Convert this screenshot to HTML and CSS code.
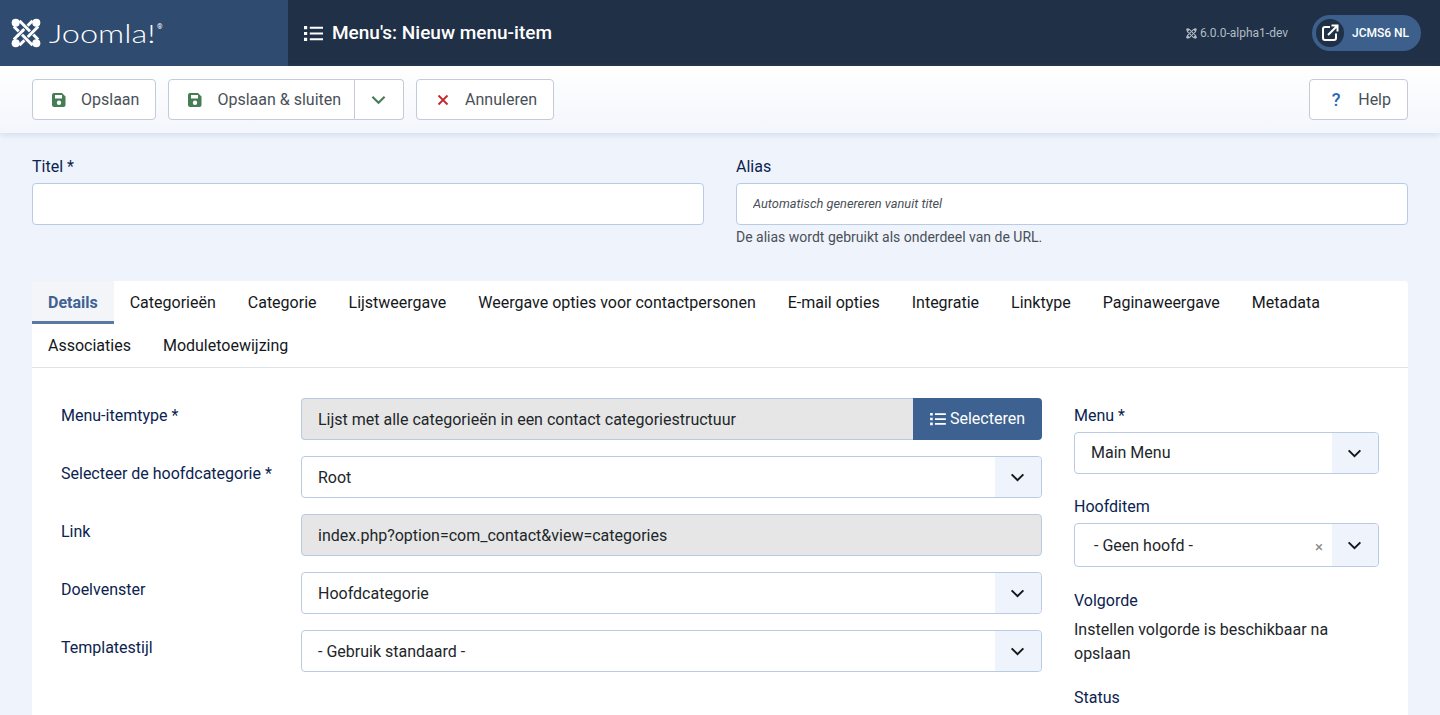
FILE: index.html
```html
<!DOCTYPE html>
<html lang="nl">
<head>
  <meta charset="UTF-8" />
  <meta name="viewport" content="width=device-width, initial-scale=1.0" />
  <title>Menu's: Nieuw menu-item</title>
  <link rel="stylesheet" href="styles.css">
</head>
<body>
  <svg class="sprites" width="0" height="0">
    <symbol id="i-list" viewBox="0 0 18 16"><path d="M0 1h3v3H0zM0 6.500h3v3H0zM0 12h3v3H0z" /><path d="M5.500 1.500H18v2H5.500zM5.500 7H18v2H5.500zM5.500 12.500H18v2H5.500z" /></symbol>
    <symbol id="i-save" viewBox="0 0 14 16"><path fill-rule="evenodd" d="M2 1h8l3.500 3.500V13a2 2 0 0 1-2 2H2a2 2 0 0 1-2-2V3a2 2 0 0 1 2-2zM3 3v3.500h7V3zM7 8.500a2.200 2.200 0 1 0 0 4.400 2.200 2.200 0 0 0 0-4.400z" /></symbol>
    <symbol id="i-chev" viewBox="0 0 16 10"><path d="M1.500 1.500 8 8l6.500-6.500" fill="none" stroke="currentColor" stroke-width="2.200" /></symbol>
    <symbol id="i-mark" viewBox="0 0 32 32">
      <g fill="none">
        <path class="gap" d="M3 23 23 3" /><path class="band" d="M3 23 23 3" />
        <path class="gap" d="M9 3 29 23" /><path class="band" d="M9 3 29 23" />
        <path class="gap" d="M9 29 29 9" /><path class="band" d="M9 29 29 9" />
        <path class="gap" d="M3 9 23 29" /><path class="band" d="M3 9 23 29" />
        <path class="gap" d="M8 18 12 14" /><path class="band" d="M7 19 13 13" />
      </g>
      <circle cx="5" cy="5" r="4.300" fill="currentColor" /><circle cx="27" cy="5" r="4.300" fill="currentColor" /><circle cx="5" cy="27" r="4.300" fill="currentColor" /><circle cx="27" cy="27" r="4.300" fill="currentColor" />
    </symbol>
  </svg>

  <header class="topbar">
    <div class="brand">
      <svg class="brand-mark"><use href="#i-mark" /></svg>
      <span class="brand-name">Joomla!</span><span class="brand-reg">®</span>
    </div>
    <div class="page-title">
      <svg class="page-icon"><use href="#i-list" /></svg>
      <h1>Menu's: Nieuw menu-item</h1>
    </div>
    <div class="top-right">
      <span class="version"><svg class="version-mark"><use href="#i-mark" /></svg>6.0.0-alpha1-dev</span>
      <a class="site-pill">
        <span class="site-icon">
          <svg viewBox="0 0 18 18" width="18" height="18"><path d="M9 3H4a2 2 0 0 0-2 2v9a2 2 0 0 0 2 2h9a2 2 0 0 0 2-2V9.500" fill="none" stroke="currentColor" stroke-width="2" /><path d="M7 11 15.500 2.500M10.500 1.500h6v6" fill="none" stroke="currentColor" stroke-width="2" /></svg>
        </span>
        <span>JCMS6 NL</span>
      </a>
    </div>
  </header>

  <div class="toolbar">
    <button class="btn"><svg class="ico-save"><use href="#i-save" /></svg>Opslaan</button>
    <div class="btn-group">
      <button class="btn btn-main"><svg class="ico-save"><use href="#i-save" /></svg>Opslaan &amp; sluiten</button>
      <button class="btn btn-drop"><svg class="ico-drop"><use href="#i-chev" /></svg></button>
    </div>
    <button class="btn"><svg class="ico-x" viewBox="0 0 12 12"><path d="M1.500 1.500l9 9M10.500 1.500l-9 9" /></svg>Annuleren</button>
    <button class="btn btn-help"><span class="ico-help">?</span>Help</button>
  </div>

  <main class="content">
    <div class="title-row">
      <div class="title-col">
        <label>Titel *</label>
        <input class="field" type="text" />
      </div>
      <div class="title-col">
        <label>Alias</label>
        <input class="field alias" type="text" placeholder="Automatisch genereren vanuit titel" />
        <p class="hint">De alias wordt gebruikt als onderdeel van de URL.</p>
      </div>
    </div>

    <section class="card">
      <nav class="tabs">
        <a class="tab active">Details</a>
        <a class="tab">Categorieën</a>
        <a class="tab">Categorie</a>
        <a class="tab">Lijstweergave</a>
        <a class="tab">Weergave opties voor contactpersonen</a>
        <a class="tab">E-mail opties</a>
        <a class="tab">Integratie</a>
        <a class="tab">Linktype</a>
        <a class="tab">Paginaweergave</a>
        <a class="tab">Metadata</a>
        <a class="tab">Associaties</a>
        <a class="tab">Moduletoewijzing</a>
      </nav>

      <div class="panel">
        <div class="main-col">
          <div class="row">
            <label>Menu-itemtype *</label>
            <div class="input-group">
              <div class="control readonly grow">Lijst met alle categorieën in een contact categoriestructuur</div>
              <button class="btn-select"><svg class="select-icon"><use href="#i-list" /></svg>Selecteren</button>
            </div>
          </div>
          <div class="row">
            <label>Selecteer de hoofdcategorie *</label>
            <div class="control select">Root<span class="arrow"><svg><use href="#i-chev" /></svg></span></div>
          </div>
          <div class="row">
            <label>Link</label>
            <div class="control readonly">index.php?option=com_contact&amp;view=categories</div>
          </div>
          <div class="row">
            <label>Doelvenster</label>
            <div class="control select">Hoofdcategorie<span class="arrow"><svg><use href="#i-chev" /></svg></span></div>
          </div>
          <div class="row">
            <label>Templatestijl</label>
            <div class="control select">- Gebruik standaard -<span class="arrow"><svg><use href="#i-chev" /></svg></span></div>
          </div>
        </div>

        <aside class="side-col">
          <div class="side-field menu-field">
            <label>Menu *</label>
            <div class="control select">Main Menu<span class="arrow"><svg><use href="#i-chev" /></svg></span></div>
          </div>
          <div class="side-field">
            <label>Hoofditem</label>
            <div class="control select fancy">- Geen hoofd -<span class="clear">×</span><span class="arrow"><svg><use href="#i-chev" /></svg></span></div>
          </div>
          <div class="side-field">
            <label>Volgorde</label>
            <p class="note">Instellen volgorde is beschikbaar na opslaan</p>
          </div>
          <div class="side-field">
            <label>Status</label>
          </div>
        </aside>
      </div>
    </section>
  </main>
</body>
</html>
```

FILE: styles.css
```css
* {
  box-sizing: border-box;
}
html, body {
  height: 715px;
  overflow: hidden;
}
body {
  margin: 0;
  background: #eff4fc;
  color: #22262a;
  font-family: Roboto, 'Liberation Sans', sans-serif;
  font-size: 16px;
  line-height: 24px;
}
.sprites {
  display: none;
}
.band {
  stroke: currentColor;
  stroke-width: 3.200;
}
.gap {
  stroke: var(--gap);
  stroke-width: 5;
}
label {
  display: block;
  color: #0b2350;
}

/* header */
.topbar {
  display: flex;
  align-items: center;
  height: 66px;
  background: #1f3047;
  color: #fff;
}
.brand {
  --gap: #2f4b70;
  display: flex;
  align-items: center;
  width: 288px;
  height: 66px;
  padding-left: 11px;
  background: #2f4b70;
}
.brand-mark {
  width: 30px;
  height: 30px;
}
.brand-name {
  width: 107px;
  margin-left: 8px;
  font-family: Lato, sans-serif;
  font-size: 26px;
  font-weight: 300;
  transform: scaleX(1.25);
  transform-origin: left center;
}
.brand-reg {
  align-self: flex-start;
  margin: 23px 0 0 1px;
  font-size: 7px;
  line-height: 8px;
}
.page-title {
  display: flex;
  align-items: center;
  flex: 1;
  padding-left: 16px;
}
.page-icon {
  width: 19px;
  height: 17px;
  margin-right: 9px;
  fill: #fff;
}
h1 {
  margin: 0;
  font-size: 19px;
  font-weight: 500;
}
.top-right {
  --gap: #1f3047;
  display: flex;
  align-items: center;
  padding-right: 19px;
}
.version {
  display: flex;
  align-items: center;
  margin-right: 24px;
  color: #b4bcc6;
  font-size: 12px;
}
.version-mark {
  width: 11px;
  height: 11px;
  margin-right: 3px;
}
.site-pill {
  display: flex;
  align-items: center;
  width: 109px;
  height: 36px;
  padding-left: 4px;
  border-radius: 18px;
  background: #3d5f8c;
  font-size: 12px;
  font-weight: 500;
}
.site-icon {
  display: flex;
  align-items: center;
  justify-content: center;
  width: 28px;
  height: 28px;
  margin-right: 8px;
  border-radius: 50%;
  background: #1f3047;
}

/* toolbar */
.toolbar {
  display: flex;
  align-items: center;
  gap: 12px;
  height: 67px;
  padding: 0 32px;
  background: linear-gradient(#fff 0%, #f3f6fc 100%);
  box-shadow: 0 2px 6px rgba(130, 150, 190, 0.25);
}
.btn {
  display: flex;
  align-items: center;
  height: 41px;
  padding: 0 16px 0 19px;
  border: 1px solid #c3cbd8;
  border-radius: 4px;
  background: #fff;
  color: #495057;
  font: inherit;
}
.ico-save {
  width: 14px;
  height: 16px;
  margin-right: 15px;
  fill: #457d54;
}
.btn-group {
  display: flex;
}
.btn-main {
  padding-right: 13px;
  border-radius: 4px 0 0 4px;
}
.btn-drop {
  width: 49px;
  padding: 0 0 0 16px;
  border-left: 0;
  border-radius: 0 4px 4px 0;
}
.ico-drop {
  width: 15px;
  height: 10px;
  color: #457d54;
}
.ico-x {
  width: 12px;
  height: 12px;
  margin: 0 16px 0 1px;
  fill: none;
  stroke: #c52827;
  stroke-width: 1.800;
}
.btn-help {
  margin-left: auto;
  padding: 0 16px 0 21px;
}
.ico-help {
  width: 10px;
  margin-right: 17px;
  color: #2a69b8;
  font-weight: 500;
  font-size: 18px;
}

/* title and alias */
.content {
  padding: 22px 32px 0;
}
.title-row {
  display: grid;
  grid-template-columns: 672px 672px;
  gap: 32px;
  height: 126px;
}
.title-col label {
  margin-bottom: 4px;
}
.field {
  display: block;
  width: 100%;
  height: 42px;
  padding: 0 16px 3px;
  border: 1px solid #b9cbe3;
  border-radius: 4px;
  background: #fff;
  font: inherit;
}
.alias::placeholder {
  color: #495057;
  font-size: 12.800px;
  font-style: italic;
  opacity: 1;
}
.hint {
  margin: 0;
  color: #495057;
  font-size: 14px;
}

/* tabs */
.card {
  background: #fff;
  border-radius: 4px 4px 0 0;
}
.tabs {
  display: flex;
  flex-wrap: wrap;
  height: 87px;
  border-bottom: 1px solid #dfe3e7;
}
.tab {
  height: 43px;
  padding: 10px 16px 0;
  color: #15181b;
}
.tab.active {
  border-bottom: 3px solid #5a7aa3;
  background: #f3f5f9;
  color: #3f6293;
  font-weight: 700;
}

/* form panel */
.panel {
  display: flex;
  height: 348px;
  padding: 30px 29px 0;
}
.main-col {
  width: 981px;
}
.row {
  display: flex;
  align-items: flex-start;
  height: 58px;
}
.row label {
  width: 240px;
  padding-top: 6px;
}
.control {
  position: relative;
  display: flex;
  align-items: center;
  flex: 1;
  height: 42px;
  padding: 0 16px;
  border: 1px solid #b9cbe3;
  border-radius: 4px;
  background: #fff;
}
.row .control {
  padding-top: 2px;
}
.readonly {
  background: #e6e6e6;
}
.input-group {
  display: flex;
  flex: 1;
}
.grow {
  border-radius: 4px 0 0 4px;
  border-right: 0;
}
.btn-select {
  display: flex;
  align-items: center;
  justify-content: center;
  width: 129px;
  height: 42px;
  padding: 0;
  border: 0;
  border-radius: 0 4px 4px 0;
  background: #3d6190;
  color: #fff;
  font: inherit;
}
.select-icon {
  width: 16px;
  height: 14px;
  margin-right: 4px;
  fill: #fff;
}
.arrow {
  position: absolute;
  top: 0;
  right: 0;
  bottom: 0;
  display: flex;
  align-items: center;
  justify-content: center;
  width: 46px;
  padding-right: 1px;
  border-radius: 0 4px 4px 0;
  background: #eff4fc;
}
.arrow svg {
  width: 15px;
  height: 9px;
  color: #15181b;
}

/* sidebar */
.side-col {
  width: 305px;
  margin: 6px 0 0 32px;
}
.side-field {
  margin-bottom: 20px;
}
.menu-field {
  margin-bottom: 21px;
}
.side-field label {
  margin-bottom: 4px;
}
.side-field .control {
  flex: none;
  width: 100%;
}
.fancy {
  height: 44px;
  margin-bottom: 22px;
  padding: 2px 16px 0 19px;
}
.clear {
  position: absolute;
  right: 55px;
  top: 11px;
  color: #888;
  font-size: 15px;
}
.note {
  margin: 5px 0 0;
}
```
